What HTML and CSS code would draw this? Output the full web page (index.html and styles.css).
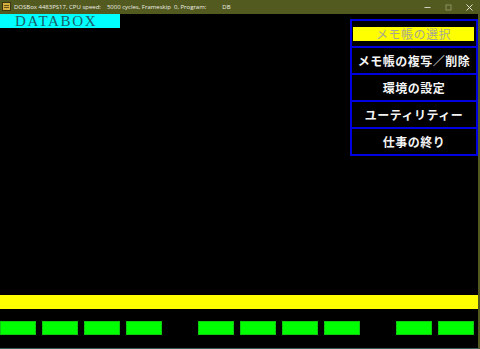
FILE: index.html
```html
<!DOCTYPE html>
<html lang="ja">
<head>
<meta charset="utf-8">
<title>DOSBox</title>
<link rel="stylesheet" href="styles.css">
</head>
<body>
<div class="titlebar">
  <svg class="appicon" width="9" height="9" viewBox="0 0 9 9">
    <rect x="0" y="0" width="9" height="9" fill="#3a3410"/>
    <rect x="1" y="1" width="7" height="7" fill="#d8b040"/>
    <rect x="2" y="3" width="5" height="1" fill="#6a5418"/>
    <rect x="2" y="5" width="5" height="1" fill="#6a5418"/>
  </svg>
  <span class="t1">DOSBox 4483PS17, CPU speed:</span>
  <span class="t2">5000 cycles, Frameskip&nbsp; 0, Program:</span>
  <span class="t3">DB</span>
  <div class="controls">
    <svg width="7" height="7" viewBox="0 0 7 7"><line x1="0.5" y1="3.5" x2="6.5" y2="3.5" stroke="#d0d0c0" stroke-width="1"/></svg>
    <svg class="dim" width="7" height="7" viewBox="0 0 7 7"><rect x="1" y="1" width="5" height="5" fill="none" stroke="#8c9060" stroke-width="1"/></svg>
    <svg width="7" height="7" viewBox="0 0 7 7"><path d="M0.5 0.5 L6.5 6.5 M6.5 0.5 L0.5 6.5" stroke="#e0e0d0" stroke-width="1"/></svg>
  </div>
</div>
<div class="screen">
  <div class="top">
    <div class="label">DATABOX</div>
    <div class="menu">
      <div class="item active"><span class="hl">メモ帳の選択</span></div>
      <div class="item">メモ帳の複写／削除</div>
      <div class="item">環境の設定</div>
      <div class="item">ユーティリティー</div>
      <div class="item">仕事の終り</div>
    </div>
  </div>
  <div class="bar"></div>
  <div class="keys">
    <div class="group"><div class="key"></div><div class="key"></div><div class="key"></div><div class="key"></div></div>
    <div class="group"><div class="key"></div><div class="key"></div><div class="key"></div><div class="key"></div></div>
    <div class="group"><div class="key"></div><div class="key"></div></div>
  </div>
</div>
</body>
</html>
```
FILE: styles.css
```css
html, body {
  margin: 0;
  padding: 0;
  background: #000;
  width: 480px;
  height: 349px;
  overflow: hidden;
}
.titlebar {
  height: 14px;
  background: #525a1f;
  display: flex;
  align-items: center;
  font-family: "Open Sans", "Noto Sans", sans-serif;
  font-size: 6px;
  color: #f0f0e8;
  white-space: pre;
}
.appicon {
  margin-left: 2px;
  margin-top: -1px;
  flex: none;
}
.t1 { margin-left: 3px; }
.t2 { margin-left: 6px; }
.t3 { margin-left: 16px; }
.controls {
  margin-left: auto;
  margin-right: 7px;
  display: flex;
  align-items: center;
  gap: 14px;
}
.screen {
  height: 334px;
  border-right: 2px solid #525a1f;
  border-bottom: 1px solid #3a5c58;
  display: flex;
  flex-direction: column;
}
.top {
  display: flex;
  justify-content: space-between;
  align-items: flex-start;
  flex: 1;
}
.label {
  width: 120px;
  height: 14px;
  background: #00ffff;
  box-sizing: border-box;
  padding-left: 15px;
  font-family: "Liberation Serif", serif;
  font-size: 15px;
  line-height: 15px;
  letter-spacing: 1.7px;
  color: #1b5e68;
  overflow: hidden;
}
.menu {
  margin-top: 5px;
  width: 128px;
  border: 2px solid #0000e0;
  box-sizing: border-box;
  display: flex;
  flex-direction: column;
}
.item {
  height: 25px;
  display: flex;
  align-items: center;
  justify-content: center;
  font-family: "Noto Sans CJK JP", sans-serif;
  font-weight: bold;
  font-size: 12px;
  letter-spacing: 0.5px;
  color: #f4f4f4;
}
.item + .item {
  border-top: 2px solid #0000e0;
}
.item.active {
  padding: 0 2px 0 1px;
}
.hl {
  display: flex;
  align-items: center;
  justify-content: center;
  width: 100%;
  height: 14px;
  background: #ffff00;
  color: #a8a890;
  font-weight: normal;
}
.bar {
  height: 14px;
  background: #ffff00;
}
.keys {
  margin-top: 12px;
  margin-bottom: 13px;
  display: flex;
  gap: 36px;
}
.group {
  display: flex;
  gap: 6px;
}
.key {
  width: 36px;
  height: 14px;
  background: #00ff00;
  box-shadow: inset 0 0 0 1px #10c810;
}
```
